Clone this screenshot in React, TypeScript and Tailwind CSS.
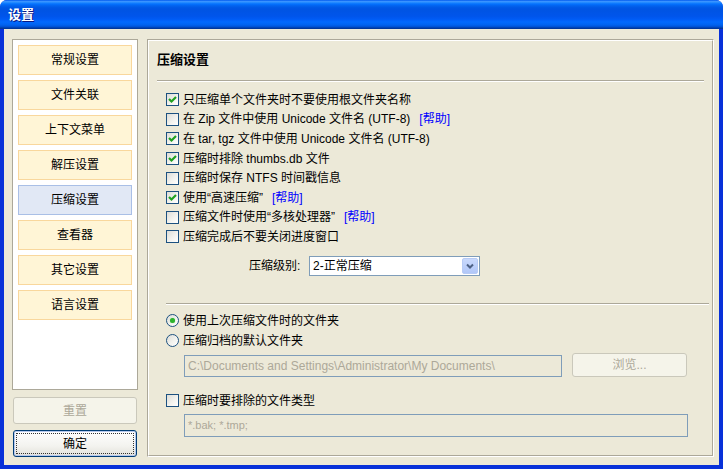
import React from 'react';

const font = { fontFamily: '"Liberation Sans", "Noto Sans CJK SC", sans-serif' };

const navItems = ['常规设置', '文件关联', '上下文菜单', '解压设置', '压缩设置', '查看器', '其它设置', '语言设置'];

const CheckBox = ({ checked }: { checked?: boolean }) => (
  <div className="w-[13px] h-[13px] shrink-0 border border-[#1C5180] bg-[linear-gradient(135deg,#DCDCD7_0%,#F4F4F0_60%,#FFFFFF_100%)] flex items-center justify-center">
    {checked && (
      <svg width="11" height="11" viewBox="0 0 11 11">
        <path d="M2 5 L4.5 7.5 L9 3" fill="none" stroke="#21A121" strokeWidth="2.2" />
      </svg>
    )}
  </div>
);

const Radio = ({ checked }: { checked?: boolean }) => (
  <div className="w-[13px] h-[13px] shrink-0 rounded-full border border-[#1C5180] bg-[linear-gradient(135deg,#DCDCD7_0%,#F4F4F0_60%,#FFFFFF_100%)] flex items-center justify-center">
    {checked && <div className="w-[5px] h-[5px] rounded-full bg-[#2DB32D] shadow-[0_0_1px_#7BD97B]" />}
  </div>
);

const Help = () => <span className="text-[#0000FF] ml-[9px]">[帮助]</span>;

const checkRows: { label: React.ReactNode; checked: boolean }[] = [
  { label: '只压缩单个文件夹时不要使用根文件夹名称', checked: true },
  { label: <>在 Zip 文件中使用 Unicode 文件名 (UTF-8)<Help /></>, checked: false },
  { label: '在 tar, tgz 文件中使用 Unicode 文件名 (UTF-8)', checked: true },
  { label: '压缩时排除 thumbs.db 文件', checked: true },
  { label: '压缩时保存 NTFS 时间戳信息', checked: false },
  { label: <>使用“高速压缩”<Help /></>, checked: true },
  { label: <>压缩文件时使用“多核处理器”<Help /></>, checked: false },
  { label: '压缩完成后不要关闭进度窗口', checked: false },
];

export default function App() {
  return (
    <div style={font} className="w-[723px] h-[469px] flex flex-col bg-[#0831D9] rounded-t-[7px] overflow-hidden text-[12px] text-black leading-[14px]">
      {/* title bar */}
      <div className="h-[29px] shrink-0 flex items-center pl-[8px] bg-[linear-gradient(to_bottom,#0058EE_0%,#3A93FF_5%,#288EFF_8%,#127DFF_11%,#036FFC_15%,#0262EE_20%,#0057E5_27%,#0054E3_33%,#0055EB_56%,#005BF5_66%,#026AFE_76%,#0062EF_86%,#0052D6_92%,#0040AB_96%,#003092_100%)]">
        <span className="text-white font-bold text-[13px] [text-shadow:1px_1px_0_#0A1883]">设置</span>
      </div>

      {/* body */}
      <div className="flex-1 flex mx-[4px] mb-[4px] bg-[#ECE9D8] pt-[10px] pb-[8px] pl-[8px] pr-[5px] gap-[9px]">
        {/* left column */}
        <div className="w-[126px] shrink-0 flex flex-col">
          <div className="h-[351px] border border-[#ACA899] bg-white pt-[5px] px-[5px] flex flex-col gap-[5px]">
            {navItems.map(item => (
              <div
                key={item}
                className={`h-[30px] shrink-0 flex items-center justify-center border ${item === '压缩设置' ? 'bg-[#E1E8F5] border-[#A9BFE6]' : 'bg-[#FFF5D6] border-[#F9D79C]'}`}
              >
                {item}
              </div>
            ))}
          </div>
          <div className="mt-[7px] mx-[1px] h-[27px] rounded-[3px] border border-[#CAC8BB] bg-[#F5F4EA] flex items-center justify-center text-[#ACA899]">
            重置
          </div>
          <div className="mt-[6px] mx-[1px] h-[27px] rounded-[3px] border border-[#003C74] bg-[linear-gradient(to_bottom,#FFFFFF_0%,#F3F3EF_60%,#E3E2DA_100%)] p-[2px] shadow-[inset_0_0_0_1px_#B6C9EE]">
            <div className="h-full border border-dotted border-[#333] flex items-center justify-center">确定</div>
          </div>
        </div>

        {/* right panel */}
        <div className="flex-1 flex border border-t-[#ACA899] border-l-[#ACA899] border-b-white border-r-white">
          <div className="flex-1 flex flex-col border border-t-white border-l-white border-b-[#ACA899] border-r-[#ACA899]">
            <div className="mt-[9px] ml-[8px] h-[20px] leading-[20px] text-[13px] font-bold">压缩设置</div>
            <div className="mt-[10px] mx-[8px] h-[2px] border-t border-t-[#ACA899] border-b border-b-white" />

            <div className="mt-[8px] ml-[17px] flex flex-col">
              {checkRows.map((row, i) => (
                <div key={i} className="h-[19.6px] flex items-center gap-[4px] whitespace-nowrap">
                  <CheckBox checked={row.checked} />
                  <span>{row.label}</span>
                </div>
              ))}
            </div>

            <div className="mt-[9px] ml-[100px] flex items-center">
              <span className="w-[60px]">压缩级别:</span>
              <div className="w-[171px] h-[20px] border border-[#7F9DB9] bg-white flex items-center justify-between pl-[3px] pr-[1px]">
                <span>2-正常压缩</span>
                <div className="w-[16px] h-[16px] rounded-[2px] border border-[#B7CBF5] bg-[linear-gradient(to_bottom,#C9D9FC,#B1C7F8)] flex items-center justify-center">
                  <svg width="8" height="6" viewBox="0 0 8 6">
                    <path d="M1 1.5 L4 4.5 L7 1.5" fill="none" stroke="#4D6185" strokeWidth="2" />
                  </svg>
                </div>
              </div>
            </div>

            <div className="mt-[27px] ml-[17px] mr-[3px] h-[2px] border-t border-t-[#ACA899] border-b border-b-white" />

            <div className="mt-[6px] ml-[17px] flex flex-col">
              <div className="h-[20px] flex items-center gap-[4px]">
                <Radio checked />
                <span>使用上次压缩文件时的文件夹</span>
              </div>
              <div className="h-[20px] flex items-center gap-[4px]">
                <Radio />
                <span>压缩归档的默认文件夹</span>
              </div>
            </div>

            <div className="mt-[2px] ml-[35px] flex items-start gap-[10px]">
              <div className="mt-[2px] w-[378px] h-[22px] border border-[#7F9DB9] flex items-center pl-[3px] text-[#ACA899] whitespace-nowrap overflow-hidden">
                C:\Documents and Settings\Administrator\My Documents\
              </div>
              <div className="w-[115px] h-[24px] rounded-[3px] border border-[#CAC8BB] bg-[#F5F4EA] flex items-center justify-center text-[#ACA899]">
                浏览...
              </div>
            </div>

            <div className="mt-[14px] ml-[17px] h-[20px] flex items-center gap-[4px]">
              <CheckBox />
              <span>压缩时要排除的文件类型</span>
            </div>

            <div className="mt-[3px] ml-[35px] w-[504px] h-[23px] border border-[#7F9DB9] flex items-center pl-[3px] text-[#ACA899] text-[11px]">
              *.bak; *.tmp;
            </div>
          </div>
        </div>
      </div>
    </div>
  );
}
